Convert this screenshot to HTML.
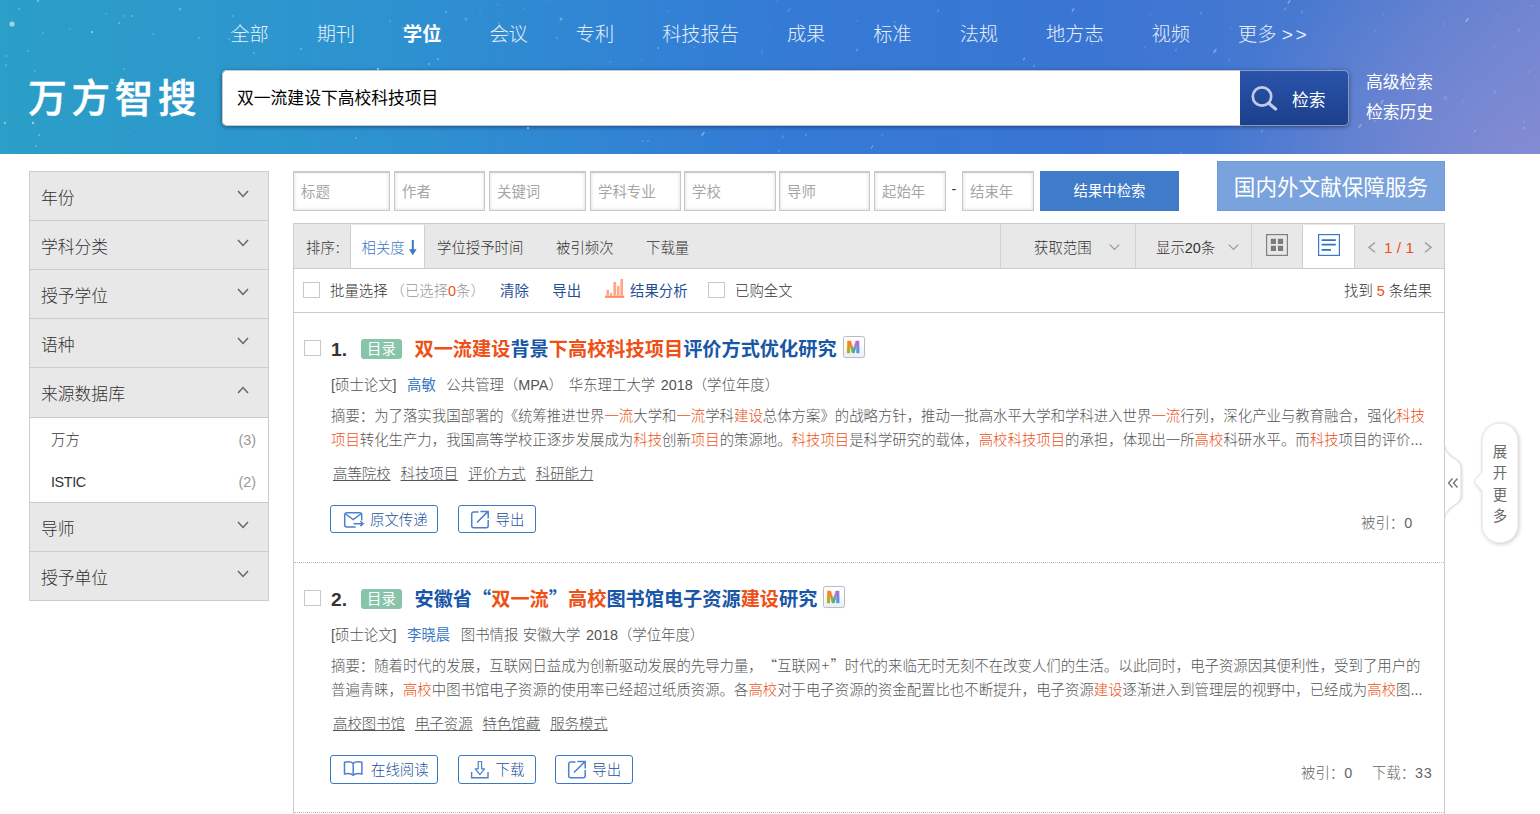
<!DOCTYPE html>
<html lang="zh-CN">
<head>
<meta charset="utf-8">
<title>万方智搜</title>
<style>
*{box-sizing:border-box;margin:0;padding:0}
html,body{width:1540px;height:814px;overflow:hidden;background:#fff}
body{font-family:"Liberation Sans","Noto Sans CJK SC",sans-serif;font-size:14.4px;color:#333;position:relative;text-spacing-trim:space-all;font-weight:300}
a{text-decoration:none;color:inherit}
ul{list-style:none}
/* ---------- header ---------- */
.hd{position:absolute;left:0;top:0;width:1540px;height:154px;overflow:hidden;
background:radial-gradient(ellipse 330px 230px at 100% 108%,rgba(140,142,212,.8),rgba(140,142,212,0) 100%),linear-gradient(90deg,#2b9fc7 0%,#2d92d0 25%,#347bd6 50%,#3a75d3 70%,#4879d0 85%,#6883cf 100%)}
.hd .stars{position:absolute;left:0;top:0}
.nav{position:absolute;left:206.3px;top:19px;height:32px;white-space:nowrap;font-size:19.2px;line-height:32px;color:#e6effb}
.nav a{display:inline-block;padding:0 24px;margin:0;float:left}
.nav a.on{color:#fff;font-weight:bold}
.logo{position:absolute;left:28.300px;top:72.500px;font-size:38.500px;line-height:52px;color:#fff;letter-spacing:4.700px;white-space:nowrap;font-weight:500;-webkit-text-stroke:.5px #fff}
.sbox{position:absolute;left:222px;top:70px;width:1127px;height:56px;border-radius:5px;background:#fff;box-shadow:0 1px 4px rgba(0,0,30,.45);overflow:hidden}
.sbox .q{position:absolute;left:15px;top:1px;line-height:56px;font-size:16.8px;color:#000;font-weight:400}
.sbox .btn{position:absolute;right:0;top:0;width:109px;height:56px;background:linear-gradient(180deg,#2a54ab,#1b3f8b);color:#fff;font-size:16.8px;line-height:62px;font-weight:400}
.sbox .btn span{position:absolute;left:52px;top:0}
.sbox .btn svg{position:absolute;left:9px;top:13px}
.hlinks{position:absolute;left:1366px;top:68px;font-size:16.8px;line-height:30px;color:#fff;font-weight:400}
.hlinks a{display:block}
.sbox:after{content:'';position:absolute;left:0;top:0;right:0;bottom:0;border:1px solid rgba(175,180,190,.75);border-radius:5px;pointer-events:none}
/* ---------- sidebar ---------- */
.side{position:absolute;left:29px;top:171px;width:240px;border:1px solid #ccc;border-bottom:none;background:#e8e8e8}
.side .it{height:49px;border-bottom:1px solid #ccc;position:relative;font-size:16.8px;line-height:54px;padding-left:11px;overflow:hidden;color:#333}
.side .it svg{position:absolute;left:206.800px;top:18px}
.side .sub{background:#fff;border-bottom:1px solid #ccc;height:85px;padding-top:1px}
.side .sub li{height:42px;line-height:42px;padding:0 12px 0 21px;font-size:14.4px;color:#333;position:relative;text-spacing-trim:space-all;font-weight:300}
.side .sub li span{position:absolute;right:12px;top:0;color:#999}
/* ---------- filter row ---------- */
.frow{position:absolute;left:293px;top:171px;height:40px;white-space:nowrap;font-size:0}
.frow .in{display:inline-block;vertical-align:top;height:40px;border:1px solid #c8c8c8;box-shadow:inset 0 1px 0 #cdcdcd,inset 0 0 3px 1px rgba(0,0,0,.1);background:#fff;margin-right:4px;font-size:14.4px;line-height:40px;padding-left:7px;color:#a6a6a6;font-weight:400}
.frow .dash{display:inline-block;vertical-align:top;font-size:14.4px;line-height:36px;color:#333;width:16px;text-align:center}
.frow .go{display:inline-block;vertical-align:top;height:40px;width:139px;background:#407bc9;color:#fff;font-size:14.4px;line-height:41px;font-weight:400;text-align:center;margin-left:6px}
.banner{position:absolute;left:1217px;top:161px;width:228px;height:50px;background:#7aa2dc;border:1px solid #6f9ad8;color:#fff;font-size:21.6px;line-height:52px;text-align:center;font-weight:400;white-space:nowrap}
/* ---------- sort bar ---------- */
.sort{position:absolute;left:293px;top:223px;width:1152px;height:46px;border:1px solid #ccc;background:#e8e8e8;font-size:14.4px;line-height:48px;color:#333}
.sort .ab{position:absolute;top:0;white-space:nowrap;line-height:48px}
.sort .tab{position:absolute;left:56px;top:1px;width:75px;height:43px;background:#fff;border-left:1px solid #cfcfcf;border-right:1px solid #cfcfcf;color:#3b78c6;padding-left:10.500px;line-height:46px}
.sort .vr{position:absolute;top:0;width:1px;height:44px;background:#d2d2d2}
.sort .act{position:absolute;left:1007.5px;top:1px;width:53px;height:43px;background:#fff;border-left:1px solid #d0d0d0;border-right:1px solid #d0d0d0}
.pg{color:#999}
.pg b{color:#ee5015;font-weight:normal}
/* ---------- batch bar ---------- */
.batch{position:absolute;left:293px;top:269px;width:1152px;height:44px;border:1px solid #ccc;border-top:none;background:#fff;line-height:44px;font-size:14.4px}
.batch .ab{position:absolute;top:0;white-space:nowrap}
.ck{position:absolute;width:16px;height:16px;border:1px solid #c8c8c8;background:#fff}
.blue{color:#1f4f96;font-weight:400}
.org{color:#ee5015}
.cq{font-style:normal;font-family:"Noto Sans CJK SC",sans-serif;line-height:0}
.gray{color:#999}
/* ---------- results ---------- */
.res{position:absolute;left:293px;top:313px;width:1152px;height:520px;border-left:1px solid #ccc;border-right:1px solid #ccc;background:#fff}
.item{position:absolute;left:0;width:1150px;height:250px;border-bottom:1px dotted #bbb}
.item .no{position:absolute;left:37px;top:22px;font-size:19.2px;font-weight:bold;line-height:30px;color:#333}
.item .tag{position:absolute;left:67px;top:26px;width:41px;height:20px;background:#88c4a9;border-radius:3px;color:#fff;font-size:14.4px;line-height:20px;text-align:center;font-weight:400}
.item .tt{position:absolute;left:120.500px;top:21px;font-size:19.2px;font-weight:bold;line-height:32px;color:#1856a8;white-space:nowrap}
.item .tt em,.abs em{font-style:normal;color:#ee5015}
.item .m{position:absolute;top:22.700px;width:22px;height:22px;border:1px solid #bcbcbc;background:linear-gradient(180deg,#fff 30%,#e9eef7);border-radius:2.500px;box-shadow:0 0 1px rgba(0,0,0,.15)}
.item .m svg{position:absolute;left:-.3px;top:-.5px}
.item .meta{position:absolute;left:37px;top:60px;font-size:14.4px;line-height:24px;color:#555;white-space:nowrap}
.item .meta a{color:#3a78c4;font-weight:400}
.abs{position:absolute;left:37px;top:91px;width:1100px;font-size:14.4px;line-height:24px;color:#555;white-space:nowrap}
.kw{position:absolute;left:39px;top:149px;font-size:14.4px;line-height:24px;color:#555;white-space:nowrap}
.kw a{text-decoration:underline;margin-right:10px}
.bt{position:absolute;top:192px;height:28px;border:1px solid #3a78c4;border-radius:3px;color:#1a4f9c;font-size:14.4px;line-height:28px;white-space:nowrap}
.bt svg{position:absolute;top:4px}
.bt span{position:absolute;top:0}
.cnt{position:absolute;top:198px;font-size:14.4px;line-height:24px;color:#666;white-space:nowrap}
/* ---------- side widget ---------- */
.fold{position:absolute;left:1444px;top:444px}
.more{position:absolute;left:1466px;top:415px}
</style>
</head>
<body>
<svg width="0" height="0" style="position:absolute"><defs>
<linearGradient id="mg1" x1="0" y1="0" x2="1" y2="0"><stop offset="0" stop-color="#ff8a1e"/><stop offset=".3" stop-color="#ff7a1a"/><stop offset=".55" stop-color="#d0808a"/><stop offset=".8" stop-color="#b265e0"/><stop offset="1" stop-color="#a868e8"/></linearGradient>
<linearGradient id="mg2" x1="0" y1="0" x2="1" y2="0"><stop offset="0" stop-color="#c89a1a"/><stop offset=".25" stop-color="#78c63e"/><stop offset=".55" stop-color="#4fa890"/><stop offset=".8" stop-color="#34a6ee"/><stop offset="1" stop-color="#34a6ee"/></linearGradient>
<linearGradient id="mv" x1="0" y1="0" x2="0" y2="1"><stop offset="0" stop-color="#000"/><stop offset=".35" stop-color="#000"/><stop offset=".75" stop-color="#fff"/><stop offset="1" stop-color="#fff"/></linearGradient>
<filter id="sh2" x="-30%" y="-10%" width="180%" height="120%"><feGaussianBlur stdDeviation="1.2"/></filter>
<mask id="mm" maskUnits="userSpaceOnUse" x="0" y="0" width="20" height="20"><rect x="0" y="4" width="20" height="13" fill="url(#mv)"/></mask>
</defs></svg>
<div class="hd">
  <svg class="stars" width="1540" height="154" viewBox="0 0 1540 154" fill="#fff"><circle cx="499" cy="23" r="1.2" opacity="0.15"/><circle cx="112" cy="83" r="0.8" opacity="0.40"/><circle cx="89" cy="78" r="0.6" opacity="0.15"/><circle cx="668" cy="11" r="0.6" opacity="0.40"/><circle cx="654" cy="127" r="0.6" opacity="0.20"/><ellipse cx="971" cy="90" rx="1.1" ry="0.4" opacity="0.28" transform="rotate(-55 971 90)"/><ellipse cx="902" cy="8" rx="1.3" ry="0.5" opacity="0.10" transform="rotate(-55 902 8)"/><ellipse cx="857" cy="21" rx="1.6" ry="0.6" opacity="0.14" transform="rotate(-55 857 21)"/><ellipse cx="833" cy="88" rx="1.8" ry="0.7" opacity="0.35" transform="rotate(-55 833 88)"/><circle cx="278" cy="90" r="1.2" opacity="0.20"/><circle cx="573" cy="84" r="0.6" opacity="0.40"/><circle cx="92" cy="32" r="1.2" opacity="0.40"/><circle cx="658" cy="48" r="1.0" opacity="0.30"/><circle cx="557" cy="38" r="0.7" opacity="0.50"/><ellipse cx="1201" cy="13" rx="1.4" ry="0.6" opacity="0.28" transform="rotate(-55 1201 13)"/><ellipse cx="762" cy="53" rx="1.6" ry="0.6" opacity="0.17" transform="rotate(-55 762 53)"/><ellipse cx="938" cy="11" rx="1.8" ry="0.7" opacity="0.21" transform="rotate(-55 938 11)"/><circle cx="254" cy="53" r="0.9" opacity="0.30"/><circle cx="60" cy="103" r="1.5" opacity="0.40"/><ellipse cx="882" cy="135" rx="1.4" ry="0.6" opacity="0.17" transform="rotate(-55 882 135)"/><ellipse cx="1071" cy="92" rx="1.8" ry="0.7" opacity="0.21" transform="rotate(-55 1071 92)"/><circle cx="106" cy="14" r="0.8" opacity="0.30"/><ellipse cx="1073" cy="10" rx="2.2" ry="0.8" opacity="0.35" transform="rotate(-55 1073 10)"/><circle cx="477" cy="89" r="1.2" opacity="0.30"/><circle cx="438" cy="59" r="1.2" opacity="0.25"/><circle cx="35" cy="71" r="0.7" opacity="0.40"/><circle cx="180" cy="9" r="1.5" opacity="0.25"/><circle cx="199" cy="38" r="0.9" opacity="0.30"/><circle cx="124" cy="69" r="1.0" opacity="0.25"/><ellipse cx="1360" cy="126" rx="2.7" ry="1.0" opacity="0.28" transform="rotate(-55 1360 126)"/><circle cx="429" cy="64" r="0.8" opacity="0.50"/><ellipse cx="1362" cy="147" rx="1.3" ry="0.5" opacity="0.10" transform="rotate(-55 1362 147)"/><circle cx="271" cy="36" r="0.7" opacity="0.15"/><ellipse cx="747" cy="91" rx="1.4" ry="0.6" opacity="0.17" transform="rotate(-55 747 91)"/><circle cx="6" cy="65" r="0.8" opacity="0.40"/><ellipse cx="872" cy="147" rx="2.2" ry="0.8" opacity="0.28" transform="rotate(-55 872 147)"/><ellipse cx="1463" cy="101" rx="2.2" ry="0.8" opacity="0.10" transform="rotate(-55 1463 101)"/><ellipse cx="703" cy="134" rx="2.7" ry="1.0" opacity="0.35" transform="rotate(-55 703 134)"/><ellipse cx="1229" cy="60" rx="1.6" ry="0.6" opacity="0.21" transform="rotate(-55 1229 60)"/><circle cx="159" cy="98" r="0.6" opacity="0.20"/><circle cx="104" cy="32" r="0.7" opacity="0.15"/><circle cx="524" cy="8" r="0.6" opacity="0.40"/><circle cx="233" cy="16" r="0.8" opacity="0.40"/><circle cx="39" cy="135" r="1.0" opacity="0.30"/><circle cx="229" cy="39" r="0.8" opacity="0.40"/><circle cx="561" cy="19" r="1.5" opacity="0.30"/><ellipse cx="1529" cy="72" rx="1.6" ry="0.6" opacity="0.17" transform="rotate(-55 1529 72)"/><circle cx="132" cy="16" r="0.8" opacity="0.50"/><circle cx="408" cy="128" r="0.7" opacity="0.40"/><circle cx="36" cy="146" r="1.0" opacity="0.25"/><circle cx="226" cy="84" r="0.6" opacity="0.40"/><circle cx="459" cy="99" r="0.6" opacity="0.50"/><ellipse cx="1302" cy="80" rx="1.3" ry="0.5" opacity="0.17" transform="rotate(-55 1302 80)"/><ellipse cx="1189" cy="82" rx="2.7" ry="1.0" opacity="0.28" transform="rotate(-55 1189 82)"/><circle cx="508" cy="34" r="1.5" opacity="0.20"/><ellipse cx="1241" cy="126" rx="2.2" ry="0.8" opacity="0.14" transform="rotate(-55 1241 126)"/><circle cx="308" cy="76" r="1.2" opacity="0.15"/><ellipse cx="1524" cy="122" rx="1.6" ry="0.6" opacity="0.17" transform="rotate(-55 1524 122)"/><circle cx="298" cy="93" r="0.8" opacity="0.30"/><ellipse cx="1245" cy="111" rx="1.4" ry="0.6" opacity="0.17" transform="rotate(-55 1245 111)"/><circle cx="124" cy="16" r="0.9" opacity="0.20"/><circle cx="520" cy="74" r="1.0" opacity="0.15"/><ellipse cx="738" cy="101" rx="2.7" ry="1.0" opacity="0.35" transform="rotate(-55 738 101)"/><circle cx="131" cy="102" r="0.9" opacity="0.50"/><ellipse cx="1155" cy="74" rx="1.3" ry="0.5" opacity="0.21" transform="rotate(-55 1155 74)"/><ellipse cx="1215" cy="51" rx="2.7" ry="1.0" opacity="0.35" transform="rotate(-55 1215 51)"/><circle cx="610" cy="62" r="0.6" opacity="0.50"/><circle cx="245" cy="153" r="0.6" opacity="0.20"/><ellipse cx="910" cy="72" rx="2.2" ry="0.8" opacity="0.14" transform="rotate(-55 910 72)"/><ellipse cx="942" cy="92" rx="1.6" ry="0.6" opacity="0.35" transform="rotate(-55 942 92)"/><ellipse cx="1444" cy="24" rx="1.8" ry="0.7" opacity="0.14" transform="rotate(-55 1444 24)"/><circle cx="33" cy="123" r="1.2" opacity="0.50"/><circle cx="158" cy="115" r="0.7" opacity="0.30"/><ellipse cx="1519" cy="30" rx="2.7" ry="1.0" opacity="0.14" transform="rotate(-55 1519 30)"/><circle cx="43" cy="33" r="1.0" opacity="0.20"/><ellipse cx="1176" cy="50" rx="1.8" ry="0.7" opacity="0.21" transform="rotate(-55 1176 50)"/><ellipse cx="1285" cy="9" rx="2.2" ry="0.8" opacity="0.17" transform="rotate(-55 1285 9)"/><ellipse cx="1382" cy="102" rx="2.7" ry="1.0" opacity="0.28" transform="rotate(-55 1382 102)"/><circle cx="648" cy="141" r="1.0" opacity="0.20"/><ellipse cx="819" cy="81" rx="1.1" ry="0.4" opacity="0.21" transform="rotate(-55 819 81)"/><ellipse cx="1196" cy="94" rx="2.7" ry="1.0" opacity="0.14" transform="rotate(-55 1196 94)"/><circle cx="265" cy="73" r="1.2" opacity="0.15"/><ellipse cx="857" cy="50" rx="1.8" ry="0.7" opacity="0.28" transform="rotate(-55 857 50)"/><ellipse cx="855" cy="121" rx="1.1" ry="0.4" opacity="0.28" transform="rotate(-55 855 121)"/><circle cx="88" cy="29" r="0.6" opacity="0.15"/><ellipse cx="782" cy="87" rx="2.7" ry="1.0" opacity="0.10" transform="rotate(-55 782 87)"/><circle cx="683" cy="94" r="1.0" opacity="0.40"/><ellipse cx="789" cy="107" rx="1.6" ry="0.6" opacity="0.28" transform="rotate(-55 789 107)"/><ellipse cx="821" cy="74" rx="1.3" ry="0.5" opacity="0.35" transform="rotate(-55 821 74)"/><ellipse cx="806" cy="135" rx="1.4" ry="0.6" opacity="0.28" transform="rotate(-55 806 135)"/><ellipse cx="1375" cy="31" rx="1.6" ry="0.6" opacity="0.14" transform="rotate(-55 1375 31)"/><circle cx="642" cy="60" r="0.8" opacity="0.15"/><ellipse cx="1034" cy="66" rx="1.3" ry="0.5" opacity="0.35" transform="rotate(-55 1034 66)"/><circle cx="466" cy="19" r="1.5" opacity="0.20"/><ellipse cx="1447" cy="99" rx="1.4" ry="0.6" opacity="0.14" transform="rotate(-55 1447 99)"/><circle cx="390" cy="21" r="0.9" opacity="0.20"/><ellipse cx="1150" cy="14" rx="1.6" ry="0.6" opacity="0.14" transform="rotate(-55 1150 14)"/><ellipse cx="1524" cy="128" rx="1.3" ry="0.5" opacity="0.35" transform="rotate(-55 1524 128)"/><circle cx="665" cy="79" r="0.8" opacity="0.30"/><circle cx="301" cy="49" r="1.2" opacity="0.25"/><circle cx="30" cy="85" r="0.9" opacity="0.50"/><circle cx="28" cy="51" r="1.0" opacity="0.25"/><ellipse cx="789" cy="10" rx="2.7" ry="1.0" opacity="0.14" transform="rotate(-55 789 10)"/><ellipse cx="1496" cy="16" rx="1.4" ry="0.6" opacity="0.17" transform="rotate(-55 1496 16)"/><circle cx="61" cy="120" r="0.8" opacity="0.20"/><ellipse cx="1262" cy="131" rx="2.2" ry="0.8" opacity="0.17" transform="rotate(-55 1262 131)"/><circle cx="625" cy="83" r="1.0" opacity="0.40"/><ellipse cx="762" cy="50" rx="1.4" ry="0.6" opacity="0.10" transform="rotate(-55 762 50)"/><ellipse cx="1231" cy="28" rx="1.1" ry="0.4" opacity="0.17" transform="rotate(-55 1231 28)"/><ellipse cx="1445" cy="98" rx="2.7" ry="1.0" opacity="0.17" transform="rotate(-55 1445 98)"/><circle cx="129" cy="132" r="0.6" opacity="0.25"/><ellipse cx="1329" cy="70" rx="1.4" ry="0.6" opacity="0.28" transform="rotate(-55 1329 70)"/><circle cx="643" cy="141" r="1.0" opacity="0.20"/><circle cx="67" cy="109" r="0.6" opacity="0.20"/><circle cx="403" cy="28" r="0.8" opacity="0.50"/><circle cx="470" cy="117" r="0.8" opacity="0.30"/><ellipse cx="770" cy="27" rx="1.4" ry="0.6" opacity="0.10" transform="rotate(-55 770 27)"/><ellipse cx="1532" cy="6" rx="1.1" ry="0.4" opacity="0.35" transform="rotate(-55 1532 6)"/><ellipse cx="779" cy="151" rx="1.8" ry="0.7" opacity="0.21" transform="rotate(-55 779 151)"/><circle cx="378" cy="69" r="1.2" opacity="0.50"/><circle cx="666" cy="76" r="1.5" opacity="0.30"/><ellipse cx="1494" cy="47" rx="1.3" ry="0.5" opacity="0.14" transform="rotate(-55 1494 47)"/><circle cx="528" cy="128" r="1.2" opacity="0.50"/><ellipse cx="979" cy="62" rx="1.4" ry="0.6" opacity="0.10" transform="rotate(-55 979 62)"/><ellipse cx="1289" cy="2" rx="2.2" ry="0.8" opacity="0.35" transform="rotate(-55 1289 2)"/><ellipse cx="1355" cy="66" rx="1.1" ry="0.4" opacity="0.10" transform="rotate(-55 1355 66)"/><ellipse cx="1024" cy="59" rx="1.8" ry="0.7" opacity="0.35" transform="rotate(-55 1024 59)"/><ellipse cx="1495" cy="92" rx="2.2" ry="0.8" opacity="0.17" transform="rotate(-55 1495 92)"/><circle cx="70" cy="29" r="0.8" opacity="0.30"/><circle cx="6" cy="56" r="0.8" opacity="0.40"/><circle cx="498" cy="5" r="0.8" opacity="0.20"/><circle cx="549" cy="0" r="0.9" opacity="0.15"/><ellipse cx="731" cy="77" rx="1.3" ry="0.5" opacity="0.14" transform="rotate(-55 731 77)"/><ellipse cx="777" cy="1" rx="1.4" ry="0.6" opacity="0.10" transform="rotate(-55 777 1)"/><circle cx="222" cy="90" r="0.9" opacity="0.15"/><circle cx="461" cy="97" r="0.6" opacity="0.40"/><ellipse cx="1475" cy="131" rx="1.3" ry="0.5" opacity="0.35" transform="rotate(-55 1475 131)"/><ellipse cx="1375" cy="121" rx="1.8" ry="0.7" opacity="0.21" transform="rotate(-55 1375 121)"/><ellipse cx="1177" cy="111" rx="1.6" ry="0.6" opacity="0.14" transform="rotate(-55 1177 111)"/><circle cx="438" cy="95" r="0.7" opacity="0.15"/><ellipse cx="1270" cy="110" rx="1.8" ry="0.7" opacity="0.35" transform="rotate(-55 1270 110)"/><circle cx="661" cy="108" r="1.0" opacity="0.20"/><ellipse cx="1401" cy="116" rx="1.8" ry="0.7" opacity="0.10" transform="rotate(-55 1401 116)"/><ellipse cx="1273" cy="90" rx="2.2" ry="0.8" opacity="0.35" transform="rotate(-55 1273 90)"/><ellipse cx="1472" cy="99" rx="1.1" ry="0.4" opacity="0.10" transform="rotate(-55 1472 99)"/><circle cx="64" cy="98" r="0.6" opacity="0.30"/><ellipse cx="1287" cy="86" rx="2.2" ry="0.8" opacity="0.10" transform="rotate(-55 1287 86)"/><ellipse cx="964" cy="105" rx="1.6" ry="0.6" opacity="0.17" transform="rotate(-55 964 105)"/><circle cx="5" cy="123" r="1.2" opacity="0.40"/><ellipse cx="1383" cy="14" rx="1.8" ry="0.7" opacity="0.10" transform="rotate(-55 1383 14)"/><ellipse cx="1148" cy="73" rx="2.7" ry="1.0" opacity="0.10" transform="rotate(-55 1148 73)"/><ellipse cx="1303" cy="36" rx="2.7" ry="1.0" opacity="0.14" transform="rotate(-55 1303 36)"/><circle cx="355" cy="100" r="0.9" opacity="0.30"/><ellipse cx="1302" cy="12" rx="2.2" ry="0.8" opacity="0.17" transform="rotate(-55 1302 12)"/><ellipse cx="1181" cy="95" rx="2.2" ry="0.8" opacity="0.14" transform="rotate(-55 1181 95)"/><circle cx="119" cy="23" r="0.8" opacity="0.50"/><ellipse cx="1145" cy="47" rx="1.8" ry="0.7" opacity="0.14" transform="rotate(-55 1145 47)"/><circle cx="19" cy="9" r="0.8" opacity="0.50"/><circle cx="153" cy="34" r="0.9" opacity="0.25"/><ellipse cx="1092" cy="44" rx="1.6" ry="0.6" opacity="0.21" transform="rotate(-55 1092 44)"/><ellipse cx="1181" cy="153" rx="1.8" ry="0.7" opacity="0.14" transform="rotate(-55 1181 153)"/><circle cx="480" cy="13" r="0.9" opacity="0.15"/><circle cx="446" cy="12" r="1.0" opacity="0.30"/><ellipse cx="1531" cy="60" rx="1.3" ry="0.5" opacity="0.10" transform="rotate(-55 1531 60)"/><ellipse cx="895" cy="22" rx="1.8" ry="0.7" opacity="0.17" transform="rotate(-55 895 22)"/><ellipse cx="1467" cy="20" rx="2.7" ry="1.0" opacity="0.35" transform="rotate(-55 1467 20)"/><ellipse cx="783" cy="137" rx="2.2" ry="0.8" opacity="0.17" transform="rotate(-55 783 137)"/><circle cx="356" cy="138" r="0.9" opacity="0.30"/><circle cx="38" cy="1" r="0.9" opacity="0.50"/><circle cx="694" cy="47" r="0.7" opacity="0.30"/><circle cx="12" cy="24" r="2.6" opacity=".55"/></svg>
  <div class="nav"><a>全部</a><a>期刊</a><a class="on">学位</a><a>会议</a><a>专利</a><a>科技报告</a><a>成果</a><a>标准</a><a>法规</a><a>地方志</a><a>视频</a><a>更多 <span style="letter-spacing:2.5px">&gt;&gt;</span></a></div>
  <div class="logo">万方智搜</div>
  <div class="sbox">
    <div class="q">双一流建设下高校科技项目</div>
    <div class="btn"><svg width="36" height="32" viewBox="0 0 36 32"><circle cx="13" cy="13.5" r="9.2" fill="none" stroke="#c3cbe8" stroke-width="2.7"/><path d="M19.8 20.3L26.6 26" stroke="#c3cbe8" stroke-width="3.2" stroke-linecap="round"/></svg><span>检索</span></div>
  </div>
  <div class="hlinks"><a>高级检索</a><a>检索历史</a></div>
</div>

<div class="side">
  <div class="it">年份<svg width="12" height="8" viewBox="0 0 12 8"><path d="M1 1l5 5.5L11 1" fill="none" stroke="#666" stroke-width="1.5"/></svg></div>
  <div class="it">学科分类<svg width="12" height="8" viewBox="0 0 12 8"><path d="M1 1l5 5.5L11 1" fill="none" stroke="#666" stroke-width="1.5"/></svg></div>
  <div class="it">授予学位<svg width="12" height="8" viewBox="0 0 12 8"><path d="M1 1l5 5.5L11 1" fill="none" stroke="#666" stroke-width="1.5"/></svg></div>
  <div class="it">语种<svg width="12" height="8" viewBox="0 0 12 8"><path d="M1 1l5 5.5L11 1" fill="none" stroke="#666" stroke-width="1.5"/></svg></div>
  <div class="it" style="height:50px">来源数据库<svg width="12" height="8" viewBox="0 0 12 8"><path d="M1 7l5-5.5L11 7" fill="none" stroke="#666" stroke-width="1.5"/></svg></div>
  <ul class="sub"><li>万方<span>(3)</span></li><li><i style="font-style:normal;letter-spacing:-.4px">ISTIC</i><span>(2)</span></li></ul>
  <div class="it">导师<svg width="12" height="8" viewBox="0 0 12 8"><path d="M1 1l5 5.5L11 1" fill="none" stroke="#666" stroke-width="1.5"/></svg></div>
  <div class="it">授予单位<svg width="12" height="8" viewBox="0 0 12 8"><path d="M1 1l5 5.5L11 1" fill="none" stroke="#666" stroke-width="1.5"/></svg></div>
</div>

<div class="frow">
  <span class="in" style="width:97px">标题</span><span class="in" style="width:91px">作者</span><span class="in" style="width:97px">关键词</span><span class="in" style="width:91px;margin-right:3px">学科专业</span><span class="in" style="width:92px;margin-right:3px">学校</span><span class="in" style="width:91px">导师</span><span class="in" style="width:72px;margin-right:0">起始年</span><span class="dash">-</span><span class="in" style="width:72px;margin-right:0">结束年</span><span class="go">结果中检索</span>
</div>
<div class="banner">国内外文献保障服务</div>

<div class="sort">
  <span class="ab" style="left:12px">排序<span style="margin-left:1px">:</span></span>
  <div class="tab">相关度<svg width="8" height="16" viewBox="0 0 8 16" style="position:absolute;left:58.400px;top:14.800px"><path d="M3.800 0v12" stroke="#3b78c6" stroke-width="2"/><path d="M0 9.200L3.800 15.200L7.600 9.200z" fill="#3b78c6"/></svg></div>
  <span class="ab" style="left:143px">学位授予时间</span>
  <span class="ab" style="left:262px">被引频次</span>
  <span class="ab" style="left:352px">下载量</span>
  <div class="vr" style="left:706px"></div>
  <span class="ab" style="left:740px">获取范围</span>
  <svg class="ab" style="left:815px;top:20px" width="11" height="7" viewBox="0 0 11 7"><path d="M.7.7l4.8 4.8L10.3 .7" fill="none" stroke="#999" stroke-width="1.2"/></svg>
  <div class="vr" style="left:841px"></div>
  <span class="ab" style="left:862px">显示20条</span>
  <svg class="ab" style="left:934px;top:20px" width="11" height="7" viewBox="0 0 11 7"><path d="M.7.7l4.8 4.8L10.3 .7" fill="none" stroke="#999" stroke-width="1.2"/></svg>
  <div class="vr" style="left:957px"></div>
  <svg class="ab" style="left:972px;top:10px" width="22" height="22" viewBox="0 0 22 22"><rect x=".6" y=".6" width="20.8" height="20.8" fill="#e8e8e8" stroke="#808080" stroke-width="1.2"/><path d="M4.800 4.800h5.200v5.200h-5.200zM11.900 4.800h5.200v5.200h-5.200zM4.800 11.700h5.200v5.200h-5.200zM11.900 11.700h5.200v5.200h-5.200z" fill="#7a7a7a"/></svg>
  <div class="act"></div>
  <svg class="ab" style="left:1024.2px;top:10px" width="22" height="22" viewBox="0 0 22 22"><rect x=".6" y=".6" width="20.8" height="20.8" fill="#fff" stroke="#3b78c6" stroke-width="1.2"/><path d="M3.600 6.100h14.200M3.600 10.700h14.200M3.600 15.900h9.400" stroke="#3570c0" stroke-width="1.700"/></svg>
  <svg class="ab" style="left:1074.3px;top:17.600px" width="8" height="11" viewBox="0 0 8 11"><path d="M7 .6L1 5.400L7 10.200" fill="none" stroke="#999" stroke-width="1.300"/></svg>
  <span class="ab pg" style="left:1090px;font-size:15.4px"><b>1 / 1</b></span>
  <svg class="ab" style="left:1129.500px;top:17.600px" width="8" height="11" viewBox="0 0 8 11"><path d="M1 .6L7 5.400L1 10.200" fill="none" stroke="#999" stroke-width="1.300"/></svg>
</div>

<div class="batch">
  <div class="ck" style="left:9.100px;top:13px;width:16.800px;height:15.700px"></div>
  <span class="ab" style="left:36px">批量选择</span>
  <span class="ab gray" style="left:96.500px">（已选择<span class="org">0</span>条）</span>
  <span class="ab blue" style="left:206px">清除</span>
  <span class="ab blue" style="left:258.3px">导出</span>
  <svg class="ab" style="left:310.9px;top:10px" width="20" height="20" viewBox="0 0 20 20"><path d="M0 17.7h19.2" stroke="#ff8c63" stroke-width="2.3"/><path d="M1.5 16.5V11.1h2.6V16.5zM5.100 16.5V13.700h2V16.5zM8.400 16.5V3h2.800V16.5zM12.100 16.5V6.900h2.400V16.5zM15.400 16.5V.1h2.600V16.5z" fill="#ffa585"/></svg>
  <span class="ab blue" style="left:336px">结果分析</span>
  <div class="ck" style="left:414px;top:13px;width:16.800px;height:15.700px"></div>
  <span class="ab" style="left:441px">已购全文</span>
  <span class="ab" style="right:12px">找到 <span class="org">5</span> 条结果</span>
</div>

<div class="res">
  <div class="item" style="top:0">
    <div class="ck" style="left:9.800px;top:27px;width:17px;height:16px"></div>
    <div class="no">1.</div>
    <div class="tag">目录</div>
    <div class="tt"><em>双一流建设</em>背景<em>下高校科技项目</em>评价方式优化研究</div>
    <div class="m" style="left:548.700px"><svg width="20" height="20" viewBox="0 0 20 20"><text x="10.300" y="16.800" font-size="16.200" font-weight="bold" text-anchor="middle" font-family="Liberation Sans, sans-serif" fill="url(#mg1)" stroke="url(#mg1)" stroke-width=".5">M</text><text x="10.300" y="16.800" font-size="16.200" font-weight="bold" text-anchor="middle" font-family="Liberation Sans, sans-serif" fill="url(#mg2)" stroke="url(#mg2)" stroke-width=".5" mask="url(#mm)">M</text></svg></div>
    <div class="meta"><span>[硕士论文]</span><a style="margin:0 10.5px">高敏</a><span>公共管理（MPA）</span><span style="margin-left:6px">华东理工大学</span><span style="margin-left:5.5px">2018（学位年度）</span></div>
    <div class="abs">摘要：为了落实我国部署的《统筹推进世界<em>一流</em>大学和<em>一流</em>学科<em>建设</em>总体方案》的战略方针，推动一批高水平大学和学科进入世界<em>一流</em>行列，深化产业与教育融合，强化<em>科技</em><br><em>项目</em>转化生产力，我国高等学校正逐步发展成为<em>科技</em>创新<em>项目</em>的策源地。<em>科技项目</em>是科学研究的载体，<em>高校科技项目</em>的承担，体现出一所<em>高校</em>科研水平。而<em>科技</em>项目的评价...</div>
    <div class="kw"><a>高等院校</a><a>科技项目</a><a>评价方式</a><a>科研能力</a></div>
    <a class="bt" style="left:36.3px;width:107.6px"><svg style="left:11.7px;top:3px" width="22" height="20" viewBox="0 0 22 20"><path d="M18.700 11.500V5.700a2 2 0 0 0-2-2H3.700a2 2 0 0 0-2 2v10.300a2 2 0 0 0 2 2h9" fill="none" stroke="#4a80cc" stroke-width="1.500"/><path d="M2.600 5l7.600 5.600L17.800 5" fill="none" stroke="#4a80cc" stroke-width="1.500"/><path d="M10.600 14.700h9.200M17.400 12.300l2.700 2.400-2.700 2.400" fill="none" stroke="#4a80cc" stroke-width="1.500"/></svg><span style="left:38.700px">原文传递</span></a>
    <a class="bt" style="left:164.100px;width:77.900px"><svg style="left:11px;top:3px" width="20" height="21" viewBox="0 0 20 21"><path d="M8.500 3H3.700a2 2 0 0 0-2 2v11.700a2 2 0 0 0 2 2h12.500a2 2 0 0 0 2-2V11" fill="none" stroke="#4a80cc" stroke-width="1.500"/><path d="M7 13.500L17.600 2.900M10.400 2.600h7.800v7" fill="none" stroke="#4a80cc" stroke-width="1.500"/></svg><span style="left:36.400px">导出</span></a>
    <div class="cnt" style="left:1067px">被引：0</div>
  </div>
  <div class="item" style="top:250px">
    <div class="ck" style="left:9.800px;top:27px;width:17px;height:16px"></div>
    <div class="no">2.</div>
    <div class="tag">目录</div>
    <div class="tt">安徽省<i class="cq">“</i><em>双一流</em><i class="cq">”</i><em>高校</em>图书馆电子资源<em>建设</em>研究</div>
    <div class="m" style="left:528.700px"><svg width="20" height="20" viewBox="0 0 20 20"><text x="10.300" y="16.800" font-size="16.200" font-weight="bold" text-anchor="middle" font-family="Liberation Sans, sans-serif" fill="url(#mg1)" stroke="url(#mg1)" stroke-width=".5">M</text><text x="10.300" y="16.800" font-size="16.200" font-weight="bold" text-anchor="middle" font-family="Liberation Sans, sans-serif" fill="url(#mg2)" stroke="url(#mg2)" stroke-width=".5" mask="url(#mm)">M</text></svg></div>
    <div class="meta"><span>[硕士论文]</span><a style="margin:0 10.5px">李晓晨</a><span>图书情报</span><span style="margin-left:4.5px">安徽大学</span><span style="margin-left:5.5px">2018（学位年度）</span></div>
    <div class="abs">摘要：随着时代的发展，互联网日益成为创新驱动发展的先导力量，<i class="cq">“</i>互联网<i class="cq" style="margin:0 1.2px">+</i><i class="cq">”</i>时代的来临无时无刻不在改变人们的生活。以此同时，电子资源因其便利性，受到了用户的<br>普遍青睐，<em>高校</em>中图书馆电子资源的使用率已经超过纸质资源。各<em>高校</em>对于电子资源的资金配置比也不断提升，电子资源<em>建设</em>逐渐进入到管理层的视野中，已经成为<em>高校</em>图...</div>
    <div class="kw"><a>高校图书馆</a><a>电子资源</a><a>特色馆藏</a><a>服务模式</a></div>
    <a class="bt" style="height:29px;line-height:29px;left:36.3px;width:107.6px"><svg style="left:11.7px;top:4px" width="22" height="18" viewBox="0 0 22 18"><path d="M10.200 3.400C8.400 1.800 4.400 1.600 1.500 2.300v11.800c2.900-.7 6.900-.5 8.700 1.200 1.800-1.700 5.800-1.900 8.700-1.200V2.300c-2.900-.7-6.900-.5-8.700 1.100zM10.200 3.400v11.900" fill="none" stroke="#4a80cc" stroke-width="1.500" stroke-linejoin="round"/></svg><span style="left:39.700px">在线阅读</span></a>
    <a class="bt" style="height:29px;line-height:29px;left:164.100px;width:77.900px"><svg style="left:11px;top:4px" width="20" height="20" viewBox="0 0 20 20"><path d="M8.200 1.500H11.600V8.800H14.500L9.900 14.600L5.300 8.800H8.200Z" fill="none" stroke="#4a80cc" stroke-width="1.200" stroke-linejoin="round"/><path d="M1.600 12v5.700H18V12" fill="none" stroke="#4a80cc" stroke-width="1.400"/></svg><span style="left:36.400px">下载</span></a>
    <a class="bt" style="height:29px;line-height:29px;left:260.900px;width:78.100px"><svg style="left:11px;top:3px" width="20" height="21" viewBox="0 0 20 21"><path d="M8.500 3H3.700a2 2 0 0 0-2 2v11.700a2 2 0 0 0 2 2h12.500a2 2 0 0 0 2-2V11" fill="none" stroke="#4a80cc" stroke-width="1.500"/><path d="M7 13.500L17.600 2.900M10.400 2.600h7.800v7" fill="none" stroke="#4a80cc" stroke-width="1.500"/></svg><span style="left:36.400px">导出</span></a>
    <div class="cnt" style="left:1007px">被引：0<span style="margin-left:19.700px">下载：<span style="letter-spacing:.6px">33</span></span></div>
  </div>
</div>

<svg class="fold" width="24" height="76" viewBox="0 0 24 76"><path d="M1 2C1 14 17 14 17 24V52C17 62 1 62 1 74" fill="#000" opacity=".13" filter="url(#sh2)" transform="translate(1.5,0)"/><path d="M1 2C1 14 17 14 17 24V52C17 62 1 62 1 74" fill="#fff" stroke="#ddd" stroke-width="1"/><path d="M8.500 34.500L4.500 39l4 4.500M13.500 34.500L9.500 39l4 4.500" fill="none" stroke="#777" stroke-width="1.400"/></svg>
<div class="more"><svg width="64" height="136" viewBox="0 0 64 136"><defs><filter id="sh" x="-30%" y="-10%" width="160%" height="120%"><feGaussianBlur stdDeviation="2"/></filter></defs><path d="M34 8a18 18 0 0 1 18 18v84a18 18 0 0 1-36 0V76l-8-9.500 8-9.500V26A18 18 0 0 1 34 8z" fill="#000" opacity=".22" filter="url(#sh)" transform="translate(1,1)"/><path d="M34 8a18 18 0 0 1 18 18v84a18 18 0 0 1-36 0V76l-8-9.500 8-9.500V26A18 18 0 0 1 34 8z" fill="#fff" stroke="#e4e4e4" stroke-width="1"/><g font-family="Liberation Sans, Noto Sans CJK SC, sans-serif" font-size="14.4" font-weight="400" fill="#6a6a6a" text-anchor="middle"><text x="34" y="42">展</text><text x="34" y="63">开</text><text x="34" y="85">更</text><text x="34" y="106">多</text></g></svg></div>
</body>
</html>
